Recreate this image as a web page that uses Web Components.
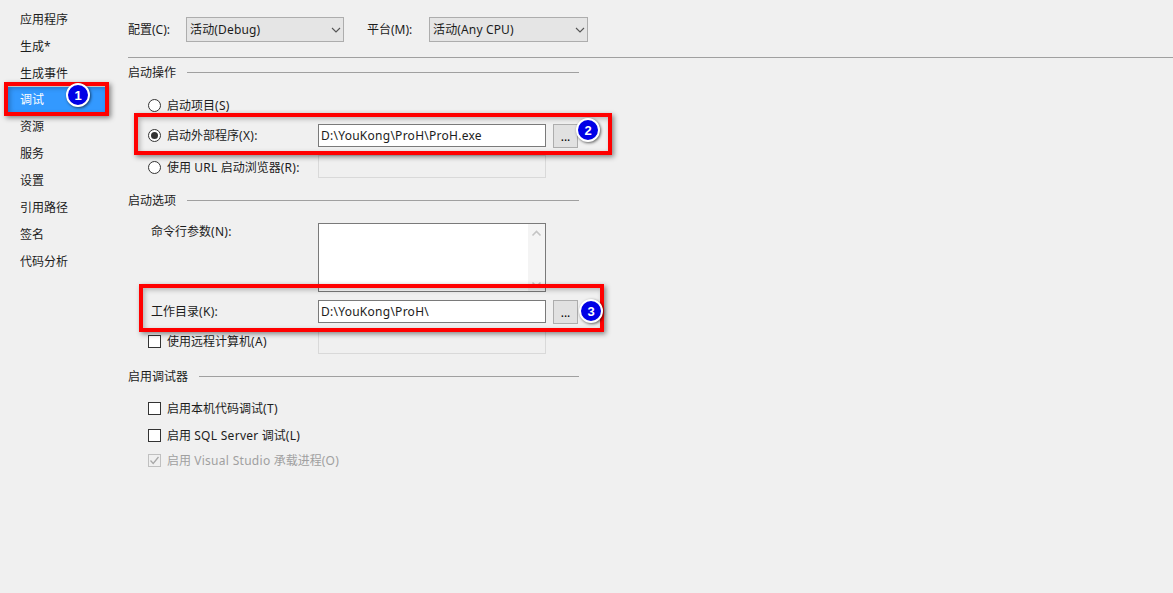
<!DOCTYPE html>
<html lang="zh-CN"><head><meta charset="utf-8"><title>调试</title>
<style>
html,body{margin:0;padding:0;background:#f0f0f0;overflow:hidden}
body{width:1173px;height:593px;font:12px/16px "Noto Sans","Noto Sans CJK SC",sans-serif;color:#1c1c1c}
.w{letter-spacing:.3px}
.down{margin-top:2px}
.up{margin-bottom:2px}
</style></head><body>
<x-page>
  <x-sidebar slot="side">
    <x-nav>应用程序</x-nav><x-nav>生成*</x-nav><x-nav>生成事件</x-nav><x-nav selected>调试</x-nav><x-nav>资源</x-nav><x-nav>服务</x-nav><x-nav>设置</x-nav><x-nav>引用路径</x-nav><x-nav>签名</x-nav><x-nav>代码分析</x-nav>
  </x-sidebar>
  <x-main>
    <x-toolbar>
      <x-select label="配置(C):" value="活动(Debug)" lw="58" w="158"></x-select>
      <x-select label="平台(M):" value="活动(Any CPU)" lw="62" w="159"></x-select>
    </x-toolbar>
    <x-rule></x-rule>
    <x-section style="margin-top:6px">启动操作</x-section>
    <x-row style="margin-top:13px"><x-radio class="down">启动项目<span class="w">(S)</span></x-radio></x-row>
    <x-row style="margin-top:8px"><x-radio checked>启动外部程序<span class="w">(X):</span></x-radio><x-input slot="control" value="D:\YouKong\ProH\ProH.exe"></x-input><x-browse slot="extra"></x-browse></x-row>
    <x-row style="margin-top:8px"><x-radio class="down">使用 <span class="w">URL</span> 启动浏览器<span class="w">(R):</span></x-radio><x-input slot="control" disabled></x-input></x-row>
    <x-section style="margin-top:14px">启动选项</x-section>
    <x-row style="margin-top:15px" tall><x-label>命令行参数<span class="w">(N):</span></x-label><x-textarea slot="control"></x-textarea></x-row>
    <x-row style="margin-top:8px"><x-label>工作目录<span class="w">(K):</span></x-label><x-input slot="control" value="D:\YouKong\ProH\"></x-input><x-browse slot="extra"></x-browse></x-row>
    <x-row style="margin-top:8px"><x-check class="up">使用远程计算机<span class="w">(A)</span></x-check><x-input slot="control" disabled></x-input></x-row>
    <x-section style="margin-top:14px">启用调试器</x-section>
    <x-row style="margin-top:13px"><x-check>启用本机代码调试<span class="w">(T)</span></x-check></x-row>
    <x-row style="margin-top:4px"><x-check>启用 <span class="w">SQL Server</span> 调试<span class="w">(L)</span></x-check></x-row>
    <x-row style="margin-top:2px"><x-check checked disabled>启用 <span class="w">Visual Studio</span> 承载进程<span class="w">(O)</span></x-check></x-row>
  </x-main>
  <x-callout slot="over" style="left:4px;top:82px;width:105px;height:34px"></x-callout>
  <x-callout slot="over" style="left:134px;top:113px;width:478px;height:42px"></x-callout>
  <x-callout slot="over" style="left:139px;top:284px;width:465px;height:48px"></x-callout>
  <x-badge slot="over" style="left:66px;top:83px">1</x-badge>
  <x-badge slot="over" style="left:576px;top:118px">2</x-badge>
  <x-badge slot="over" style="left:579px;top:299px">3</x-badge>
</x-page>
<script>
function def(name, css, html){
  customElements.define(name, class extends HTMLElement{
    connectedCallback(){
      if(this.shadowRoot) return;
      const r=this.attachShadow({mode:'open'});
      const a=n=>this.getAttribute(n);
      r.innerHTML='<style>'+css+'</style>'+(typeof html==='function'?html(a,this):html);
    }
  });
}
const esc=s=>(s||'').replace(/&/g,'&amp;').replace(/</g,'&lt;');
def('x-page',':host{display:flex;position:relative;width:1173px;height:593px;overflow:hidden}','<slot name="side"></slot><slot></slot><slot name="over"></slot>');
def('x-sidebar',':host{display:flex;flex-direction:column;flex:none;width:120px;margin-left:8px;padding-top:6px;box-sizing:border-box}','<slot></slot>');
def('x-nav',':host{display:block;width:98px;height:27px;line-height:28px;padding-left:12px;box-sizing:border-box}:host([selected]){background:#3399ff;color:#fff;height:26px;line-height:26px}','<slot></slot>');
def('x-main',':host{display:flex;flex-direction:column;flex:1;padding-top:17px;min-width:0}','<slot></slot>');
def('x-toolbar',':host{display:flex;gap:23px;height:25px}','<slot></slot>');
def('x-select',`:host{display:flex;align-items:center}.l{flex:none}.b{box-sizing:border-box;height:25px;border:1px solid #adadad;background:#e5e5e5;display:flex;align-items:center;justify-content:space-between;padding:0 2px 0 3px;letter-spacing:.15px}svg{display:block}`,
 (a)=>`<span class="l" style="width:${a('lw')}px">${esc(a('label'))}</span><div class="b" style="width:${a('w')}px"><span>${esc(a('value'))}</span><svg width="10" height="6" viewBox="0 0 10 6"><path d="M1 1L5 5L9 1" fill="none" stroke="#555" stroke-width="1.1"/></svg></div>`);
def('x-rule',':host{display:block;height:1px;background:#a0a0a0;margin-top:15px}','');
def('x-section',':host{display:flex;align-items:center;gap:11px;width:451px;height:16px}.t{flex:1;height:1px;background:#a0a0a0}span{padding-top:2px}','<span><slot></slot></span><div class="t"></div>');
def('x-row',':host{display:flex;align-items:center;padding-left:20px;height:23px}:host([tall]){height:69px;align-items:flex-start}.m{flex:none;width:170px;display:flex;white-space:nowrap}.x{margin-left:7px;display:flex}','<div class="m"><slot></slot></div><slot name="control"></slot><div class="x"><slot name="extra"></slot></div>');
def('x-label',':host{display:block;padding-left:3px;line-height:18px}','<slot></slot>');
def('x-radio',':host{display:flex;align-items:center;gap:6px}svg{display:block;flex:none}span{white-space:pre}',
 (a,e)=>`<svg width="13" height="13" viewBox="0 0 13 13"><circle cx="6.5" cy="6.5" r="6" fill="#fff" stroke="#333" stroke-width="1"/>${e.hasAttribute('checked')?'<circle cx="6.5" cy="6.5" r="3.5" fill="#333"/>':''}</svg><span><slot></slot></span>`);
def('x-check',':host{display:flex;align-items:center;gap:6px}:host([disabled]){color:#a0a0a0}svg{display:block;flex:none}span{white-space:pre}',
 (a,e)=>{const d=e.hasAttribute('disabled');return `<svg width="13" height="13" viewBox="0 0 13 13"><rect x=".5" y=".5" width="12" height="12" fill="${d?'#f0f0f0':'#fff'}" stroke="${d?'#c0c0c0':'#333'}"/>${e.hasAttribute('checked')?'<path d="M2.5 6.5L5.2 9.4L10.5 3" fill="none" stroke="#a8a8a8" stroke-width="1.3"/>':''}</svg><span><slot></slot></span>`});
def('x-input',':host{display:block;box-sizing:border-box;width:228px;height:23px;border:1px solid #7a7a7a;background:#fff;padding:0 2px;line-height:21px;white-space:nowrap;letter-spacing:.26px}:host([disabled]){border-color:#d9d9d9;background:#f0f0f0}',(a)=>esc(a('value')));
def('x-textarea',':host{display:flex;justify-content:flex-end;box-sizing:border-box;width:228px;height:69px;border:1px solid #7a7a7a;background:#fff}.s{width:17px;background:#f4f4f4;display:flex;flex-direction:column;justify-content:space-between;align-items:center;padding:6px 0 3px}svg{display:block}',
 '<div class="s"><svg width="11" height="7" viewBox="0 0 11 7"><path d="M1.5 5.5L5.5 1.5L9.5 5.5" fill="none" stroke="#c4c4c4" stroke-width="1.6"/></svg><svg width="11" height="7" viewBox="0 0 11 7"><path d="M1.5 1.5L5.5 5.5L9.5 1.5" fill="none" stroke="#c4c4c4" stroke-width="1.6"/></svg></div>');
def('x-browse',':host{display:flex;justify-content:center;box-sizing:border-box;width:25px;height:24px;border:1px solid #adadad;background:#e1e1e1;line-height:24px;color:#000}','...');
def('x-callout',':host{position:absolute;box-sizing:border-box;border:4px solid #f00;box-shadow:2px 2px 5px rgba(0,0,0,.45),inset 2px 2px 5px rgba(0,0,0,.25)}','');
def('x-badge',':host{position:absolute;box-sizing:border-box;width:24px;height:24px;border-radius:50%;background:#0000e6;border:2px solid #fff;box-shadow:1px 1px 3px rgba(0,0,0,.6);color:#fff;display:flex;align-items:center;justify-content:center;font:bold 13px/1 "Liberation Sans",sans-serif}','<slot></slot>');
</script>
</body></html>
